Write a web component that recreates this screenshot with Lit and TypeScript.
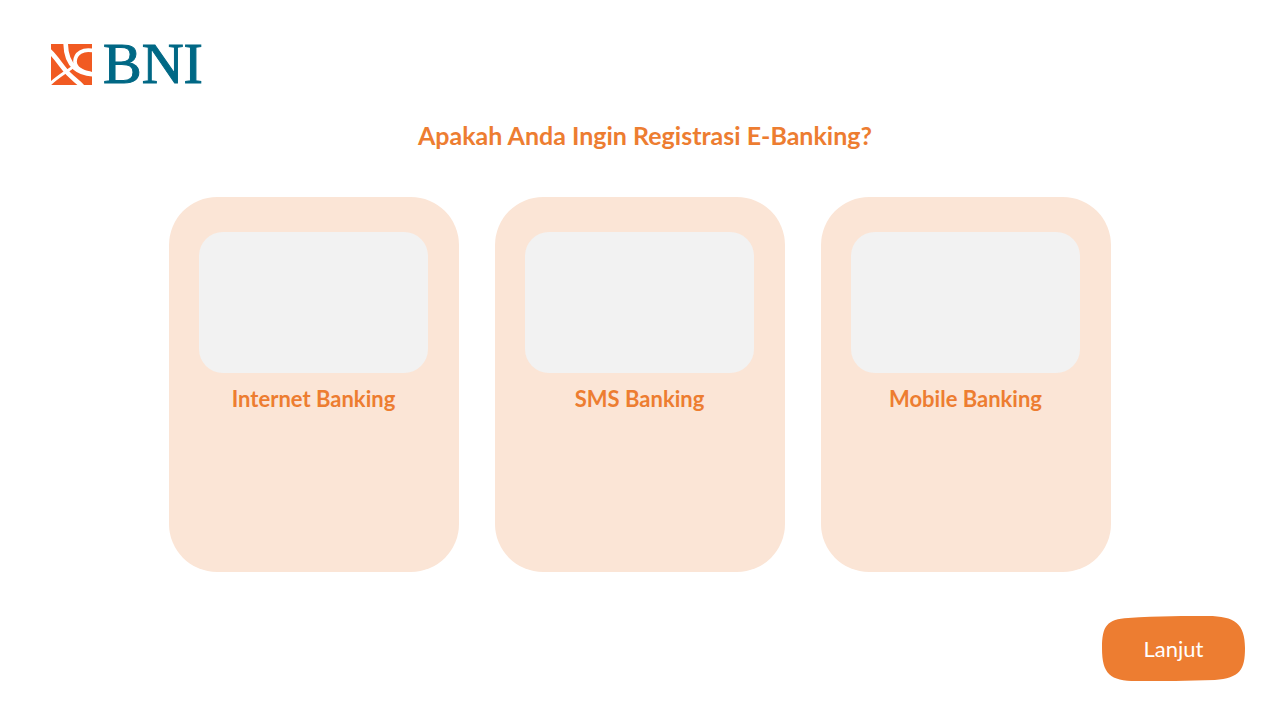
import { LitElement, html, css } from "lit";
import { customElement } from "lit/decorators.js";

@customElement("app-root")
export class AppRoot extends LitElement {
  static styles = css`
    :host {
      display: flex;
      flex-direction: column;
      box-sizing: border-box;
      min-height: 100vh;
      padding: 32px 35px 39px;
      background: #fff;
      color: #ed7d31;
      font-family: Lato, "Open Sans", sans-serif;
    }
    .logo {
      display: flex;
      align-items: center;
      gap: 11px;
      height: 64px;
      padding-left: 16px;
      color: #006885;
      font-family: "Liberation Serif", serif;
      font-size: 58px;
      line-height: 64px;
      -webkit-text-stroke: 1px #006885;
    }
    .mark {
      width: 41px;
      height: 41px;
    }
    h1 {
      margin: 23px 0 0;
      padding-left: 10px;
      font-size: 25px;
      line-height: 32px;
      font-weight: 700;
      text-align: center;
    }
    .cards {
      display: grid;
      grid-template-columns: repeat(3, minmax(0, 290px));
      justify-content: center;
      gap: 36px;
      margin-top: 46px;
    }
    .card {
      box-sizing: border-box;
      min-height: 375px;
      padding: 35px 31px 35px 30px;
      border-radius: 48px;
      background: #fbe5d6;
    }
    .picture {
      height: 141px;
      border-radius: 24px;
      background: #f2f2f2;
    }
    h2 {
      margin: 12px 0 0;
      font-size: 22px;
      line-height: 28px;
      font-weight: 700;
      text-align: center;
    }
    .next {
      align-self: flex-end;
      width: 143px;
      height: 65px;
      margin-top: auto;
      padding: 0;
      border: 0;
      position: relative;
      background: none;
      color: #fff;
      font: 400 22px/28px Lato, "Open Sans", sans-serif;
      cursor: pointer;
    }
    .shape {
      position: absolute;
      inset: 0;
      width: 100%;
      height: 100%;
    }
    .caption {
      position: relative;
    }
  `;

  render() {
    return html`
      <div class="logo">
        <svg class="mark" viewBox="0 0 123 123" aria-hidden="true">
          <rect width="123" height="123" fill="#f15a22" />
          <g fill="none" stroke="#fff">
            <path stroke-width="14" d="M44 -4C44 34 56 58 72 72C86 84 104 90 127 91" />
            <path stroke-width="11" d="M127 20C96 13 73 28 72 52C72 70 88 84 127 90" />
            <path stroke-width="14" d="M-6 20C16 40 32 68 52 89C66 103 78 112 94 127" />
            <path stroke-width="9" d="M-4 121C20 98 46 84 72 64" />
          </g>
        </svg>
        <span>BNI</span>
      </div>
      <h1>Apakah Anda Ingin Registrasi E-Banking?</h1>
      <div class="cards">
        ${["Internet Banking", "SMS Banking", "Mobile Banking"].map(
          (name) => html`<section class="card">
            <div class="picture"></div>
            <h2>${name}</h2>
          </section>`
        )}
      </div>
      <button class="next" type="button">
        <svg class="shape" viewBox="0 0 142 65" preserveAspectRatio="none" aria-hidden="true">
          <path fill="#ed7d31" d="M0 32C0 10 5 3 26 2C55 0 85 0 105 0C132 0 142 8 142 32C142 54 137 62 112 64C85 65 60 65 34 65C8 65 0 58 0 32Z" />
        </svg>
        <span class="caption">Lanjut</span>
      </button>
    `;
  }
}
